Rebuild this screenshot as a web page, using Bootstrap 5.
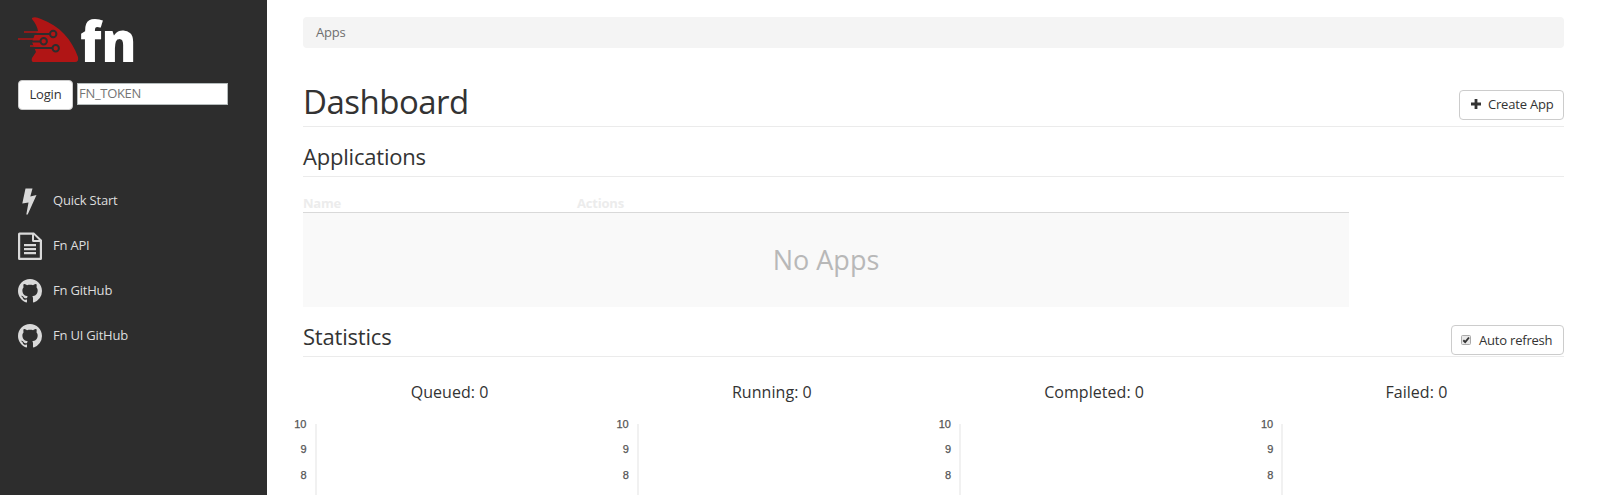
<!DOCTYPE html>
<html lang="en">
<head>
<meta charset="utf-8">
<meta name="viewport" content="width=device-width, initial-scale=1">
<title>Fn Dashboard</title>
<link href="https://cdn.jsdelivr.net/npm/bootstrap@5.3.0/dist/css/bootstrap.min.css" rel="stylesheet">
<style>
  body { font-family: "Open Sans", sans-serif; font-size: 13px; line-height: 18px; color: #333; background: #fff; letter-spacing: -.2px; }
  .app-shell { height: 100vh; }
  .sidebar { width: 267px; background: #2d2d2d; padding: 16px 18px 0; }
  .logo { width: 118px; height: 48px; overflow: visible; }
  .logo text { font: 800 56px "Open Sans", sans-serif; letter-spacing: 0; }
  .login-form { margin-top: 16px; gap: 4px; height: 30px; }
  .btn-plain { --bs-btn-font-size: 13px; --bs-btn-line-height: 18px; --bs-btn-padding-y: 5px; --bs-btn-padding-x: 11px;
    --bs-btn-bg: #fff; --bs-btn-border-color: #ccc; --bs-btn-color: #333; --bs-btn-border-radius: 4px; height: 30px; letter-spacing: -.2px; }
  .login-form .btn-plain { width: 55px; padding: 4px 0 6px; }
  .create-btn { width: 105px; margin-bottom: 6px; padding: 4px 0 6px 11px; }
  .create-btn svg { margin-right: 7px; }
  .refresh-btn { width: 113px; margin-bottom: 1px; padding: 5px 0 5px 9px; }
  .token { width: 151px; height: 22px; margin-top: 3px; padding: 0 1px 2px; border: 1px solid #b5bcbc; color: #333; background: #fff; line-height: 18px; letter-spacing: -.3px; }
  .token::placeholder { color: #757575; opacity: 1; }
  .side-menu { margin-top: 69px; }
  .side-menu a { height: 45px; color: #ddd; }
  .side-menu svg { width: 24px; height: 28px; margin: 0 11px 1px 0; fill: #d9d9d9; }
  .side-menu span { padding-bottom: 3px; }
  .content { padding: 17px 35px 0 36px; }
  .crumbs { --bs-breadcrumb-font-size: 13px; height: 31px; padding: 6px 13px; background: #f4f4f4; border-radius: 4px; color: #6f6f6f; margin: 0; }
  .page-head { height: 79px; border-bottom: 1px solid #ebebeb; }
  .page-head h1 { font-size: 33px; line-height: 36px; margin: 0 0 6px; font-weight: 400; letter-spacing: -.5px; }
  .section-head { border-bottom: 1px solid #ebebeb; height: 50px; }
  .section-head h2 { font-size: 22px; line-height: 26px; margin: 0 0 7px; font-weight: 400; letter-spacing: -.2px; }
  .apps { width: 1046px; margin-top: 17px; }
  .apps-head { height: 19px; line-height: 19px; border-bottom: 1px solid #d9d9d9; color: #ececec; font-weight: 700; }
  .apps-head div:first-child { width: 274px; }
  .no-apps { height: 94px; background: #f9f9f9; color: #b8b8b8; font-size: 27px; letter-spacing: 0; }
  .stats-head { height: 50px; }
  .check-box { width: 10px; height: 10px; margin-right: 8px; }
  .charts { margin: 0 -13.500px 0 -14.5px; height: 138px; overflow: hidden; }
  .charts h3 { font-size: 16px; line-height: 20px; font-weight: 400; margin: 25px 0 0; letter-spacing: .05px; }
  .chart-area { margin-top: 15px; height: 94px; }
  .ticks { width: 18px; font: 11px/14px "Liberation Sans", sans-serif; color: #555; letter-spacing: 0; -webkit-text-stroke: .25px #555; }
  .ticks div { height: 25.3px; }
  .axis { width: 2px; margin: 7px 0 0 8px; background: #f1f1f1; }
</style>
</head>
<body>
<div class="app-shell d-flex overflow-hidden">
  <aside class="sidebar flex-shrink-0">
    <svg class="logo d-block" viewBox="0 0 118 48">
      <path fill="#b01515" d="M14 2Q17 0 23 3C42 10 54 24 60 41Q61 46 57 46H15Q13 45 14 42L18 36L14 26L17 18L20 15Q19 9 14 3Z"/>
      <g fill="none" stroke="#2d2d2d" stroke-width="2">
        <path d="M16 18H32M13 25.500H22M16 32H34"/>
        <circle cx="35.200" cy="18" r="3.200"/><circle cx="25.700" cy="25.200" r="3.200"/><circle cx="37.700" cy="32.200" r="3.200"/>
      </g>
      <path fill="none" stroke="#b01515" stroke-width="1.700" d="M6 16H21M0 23H19M12 30H21"/>
      <text x="62" y="46" fill="#fff" textLength="56.500" lengthAdjust="spacingAndGlyphs">fn</text>
    </svg>
    <form class="login-form d-flex">
      <button type="button" class="btn btn-plain">Login</button>
      <input class="token" type="text" placeholder="FN_TOKEN" aria-label="Token">
    </form>
    <nav class="side-menu d-flex flex-column">
      <a href="#" class="d-flex align-items-center text-decoration-none"><svg viewBox="0 0 24 28"><path d="M7.500 1.500H14.500L12.300 9.500L18.500 8L9.700 27.500H8.300L10.500 15.500L4.300 16.500Z"/></svg><span>Quick Start</span></a>
      <a href="#" class="d-flex align-items-center text-decoration-none"><svg viewBox="0 0 24 28"><path fill-rule="evenodd" d="M1.500 .5H16L24 8V26.500Q24 28 22.500 28H1.500Q0 28 0 26.500V2Q0 .5 1.500 .5ZM2.200 2.700V25.800H21.800V10H15.500Q14 10 14 8.500V2.700ZM16 3V8H21ZM6 12H18V14.200H6ZM6 16H18V18.200H6ZM6 20H18V22.200H6Z"/></svg><span>Fn API</span></a>
      <a href="#" class="d-flex align-items-center text-decoration-none"><svg viewBox="0 0 16 16"><path d="M8 0C3.580 0 0 3.580 0 8c0 3.540 2.290 6.530 5.470 7.590.4.070.550-.170.550-.380 0-.190-.010-.820-.010-1.490-2.010.370-2.530-.490-2.690-.940-.090-.230-.480-.940-.820-1.130-.280-.150-.680-.520-.010-.530.630-.010 1.080.580 1.230.820.720 1.210 1.870.870 2.330.660.070-.520.280-.870.510-1.070-1.780-.200-3.640-.890-3.640-3.950 0-.870.310-1.590.820-2.150-.080-.200-.360-1.020.080-2.120 0 0 .670-.210 2.200.820.640-.180 1.320-.270 2-.270s1.360.090 2 .270c1.530-1.040 2.200-.820 2.200-.820.440 1.100.160 1.920.080 2.120.510.560.820 1.270.820 2.150 0 3.070-1.870 3.750-3.650 3.950.290.250.540.730.540 1.480 0 1.070-.010 1.930-.010 2.200 0 .210.150.460.550.380A8 8 0 0 0 16 8c0-4.420-3.580-8-8-8Z"/></svg><span>Fn GitHub</span></a>
      <a href="#" class="d-flex align-items-center text-decoration-none"><svg viewBox="0 0 16 16"><path d="M8 0C3.580 0 0 3.580 0 8c0 3.540 2.290 6.530 5.470 7.590.4.070.550-.170.550-.380 0-.190-.010-.820-.010-1.490-2.010.370-2.530-.490-2.690-.940-.090-.230-.480-.940-.820-1.130-.280-.150-.680-.520-.010-.530.630-.010 1.080.580 1.230.820.720 1.210 1.870.870 2.330.660.070-.520.280-.870.510-1.070-1.780-.200-3.640-.890-3.640-3.950 0-.870.310-1.590.820-2.150-.080-.200-.360-1.020.080-2.120 0 0 .670-.210 2.200.820.640-.180 1.320-.270 2-.270s1.360.090 2 .270c1.530-1.040 2.200-.820 2.200-.820.440 1.100.160 1.920.080 2.120.510.560.820 1.270.820 2.150 0 3.070-1.870 3.750-3.650 3.950.290.250.540.730.540 1.480 0 1.070-.010 1.930-.010 2.200 0 .210.150.460.550.380A8 8 0 0 0 16 8c0-4.420-3.580-8-8-8Z"/></svg><span>Fn UI GitHub</span></a>
    </nav>
  </aside>
  <main class="content flex-grow-1">
    <ol class="breadcrumb crumbs"><li class="breadcrumb-item">Apps</li></ol>
    <div class="page-head d-flex justify-content-between align-items-end">
      <h1>Dashboard</h1>
      <button type="button" class="btn btn-plain create-btn d-flex align-items-center"><svg width="10" height="10" viewBox="0 0 10 10"><path d="M5 0V10M0 5H10" stroke="#333" stroke-width="2.800"/></svg>Create App</button>
    </div>
    <div class="section-head d-flex align-items-end"><h2>Applications</h2></div>
    <div class="apps">
      <div class="apps-head d-flex"><div>Name</div><div>Actions</div></div>
      <div class="no-apps d-flex align-items-center justify-content-center">No Apps</div>
    </div>
    <div class="section-head stats-head d-flex align-items-end justify-content-between">
      <h2>Statistics</h2>
      <button type="button" class="btn btn-plain refresh-btn d-flex align-items-center"><svg class="check-box" viewBox="0 0 10 10"><rect x=".5" y=".5" width="9" height="9" rx="1" fill="#e8e8e8" stroke="#aaa"/><path d="M2.300 5.200L4.200 7L8 2.500" fill="none" stroke="#333" stroke-width="1.900"/></svg>Auto refresh</button>
    </div>
    <div class="row g-0 charts">
      <div class="col-3"><h3 class="text-center">Queued: 0</h3><div class="chart-area d-flex"><div class="ticks text-end"><div>10</div><div>9</div><div>8</div></div><div class="axis"></div></div></div>
      <div class="col-3"><h3 class="text-center">Running: 0</h3><div class="chart-area d-flex"><div class="ticks text-end"><div>10</div><div>9</div><div>8</div></div><div class="axis"></div></div></div>
      <div class="col-3"><h3 class="text-center">Completed: 0</h3><div class="chart-area d-flex"><div class="ticks text-end"><div>10</div><div>9</div><div>8</div></div><div class="axis"></div></div></div>
      <div class="col-3"><h3 class="text-center">Failed: 0</h3><div class="chart-area d-flex"><div class="ticks text-end"><div>10</div><div>9</div><div>8</div></div><div class="axis"></div></div></div>
    </div>
  </main>
</div>
<script src="https://cdn.jsdelivr.net/npm/bootstrap@5.3.0/dist/js/bootstrap.bundle.min.js"></script>
</body>
</html>
